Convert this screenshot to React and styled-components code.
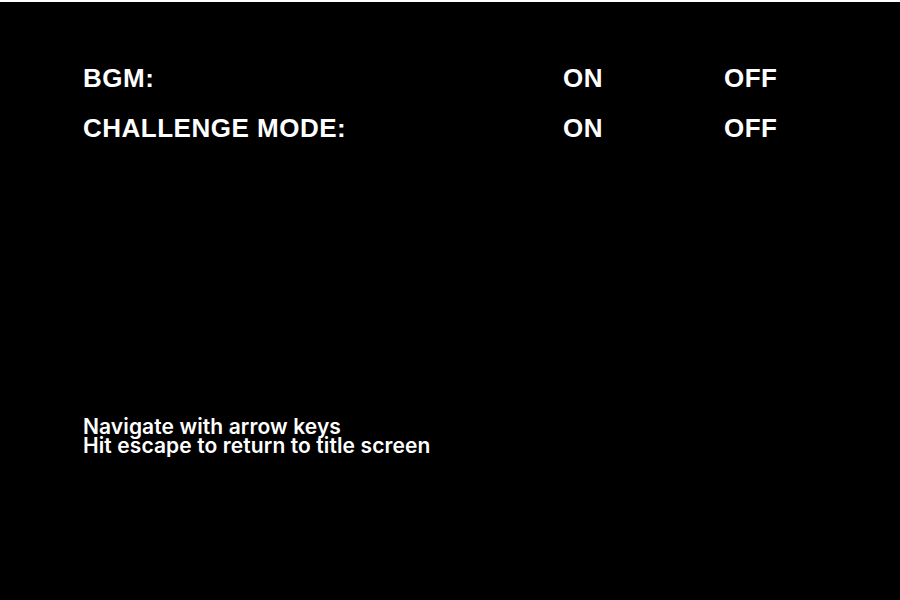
import React from 'react';
import styled, { createGlobalStyle } from 'styled-components';

const GlobalStyle = createGlobalStyle`
  html, body {
    margin: 0;
    padding: 0;
    background: #ffffff;
  }
  body {
    font-family: "Liberation Sans", Arial, sans-serif;
    color: #ffffff;
  }
`;

const Screen = styled.div`
  margin-top: 2px;
  height: 598px;
  background: #000000;
  padding: 61px 0 0 83px;
  box-sizing: border-box;
  display: flex;
  flex-direction: column;
`;

const OptionList = styled.div`
  display: grid;
  grid-template-columns: 480px 161px auto;
  row-gap: 20px;
`;

const Cell = styled.div`
  font-size: 26px;
  font-weight: 700;
  line-height: 30px;
  letter-spacing: 0.5px;
  color: #ffffff;
`;

const Help = styled.div`
  margin-top: 274px;
  font-family: Inter, "Liberation Sans", sans-serif;
  font-size: 21px;
  font-weight: 600;
  line-height: 19px;
  letter-spacing: 0.1px;
`;

const options = [
  { label: 'BGM:' },
  { label: 'CHALLENGE MODE:' },
];

const App = () => (
  <>
    <GlobalStyle />
    <Screen>
      <OptionList>
        {options.map((opt) => (
          <React.Fragment key={opt.label}>
            <Cell>{opt.label}</Cell>
            <Cell>ON</Cell>
            <Cell>OFF</Cell>
          </React.Fragment>
        ))}
      </OptionList>
      <Help>
        <div>Navigate with arrow keys</div>
        <div>Hit escape to return to title screen</div>
      </Help>
    </Screen>
  </>
);

export default App;
